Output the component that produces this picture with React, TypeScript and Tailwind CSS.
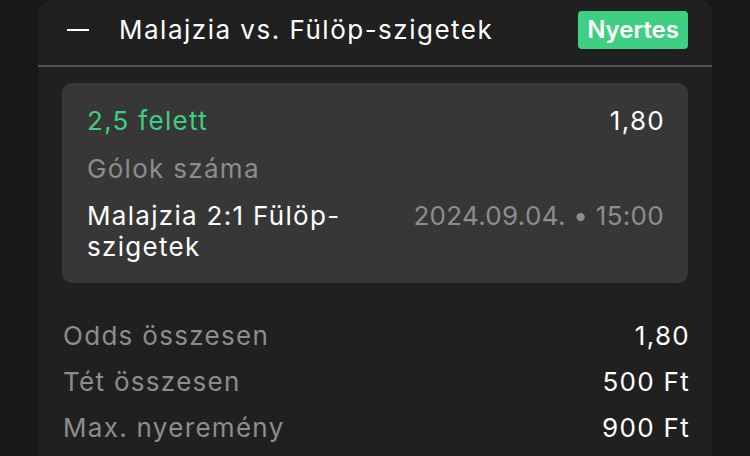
export default function App() {
  // Summary rows under the bet card
  const totals = [
    { label: "Odds összesen", value: "1,80" },
    { label: "Tét összesen", value: "500 Ft" },
    { label: "Max. nyeremény", value: "900 Ft" },
  ];

  return (
    <main
      className="h-[456px] w-[750px] overflow-hidden bg-[#18181a] px-[38px]"
      style={{ fontFamily: "Inter, 'Noto Sans', sans-serif" }}
    >
      <section className="h-full rounded-t-[14px] bg-[#202020]">
        {/* Header */}
        <div className="flex h-[65px] items-center pb-[5px] pl-[29px] pr-[24px]">
          <div className="h-[2px] w-[22px] bg-white" />
          <h1 className="ml-[30px] flex-1 text-[26px] leading-none tracking-[1.5px] text-white">
            Malajzia vs. Fülöp-szigetek
          </h1>
          <span className="flex h-[38px] items-center rounded-[4px] bg-[#3ecf82] px-[9px] text-[24px] font-semibold text-white">
            Nyertes
          </span>
        </div>
        <div className="h-[2px] bg-[#555555]" />

        {/* Bet card */}
        <div className="mx-[24px] mt-[16px] h-[200px] rounded-[10px] bg-[#373737] px-[25px] pt-[22px] text-[26px] leading-[31px] tracking-[1.3px]">
          <div className="flex justify-between">
            <span className="text-[#3ecf82]">2,5 felett</span>
            <span className="-mr-[2px] text-white">1,80</span>
          </div>
          <div className="mt-[17px] text-[#8d8d8d]">Gólok száma</div>
          <div className="mt-[16px] flex justify-between">
            <span className="w-[290px] text-white">Malajzia 2:1 Fülöp-szigetek</span>
            <span className="-mr-[1px] tracking-[0.3px] text-[#8d8d8d]">2024.09.04. • 15:00</span>
          </div>
        </div>

        {/* Totals */}
        <div className="mt-[30px] flex flex-col pl-[25px] pr-[24px] text-[26px] leading-[46px] tracking-[1.3px]">
          {totals.map((row) => (
            <div key={row.label} className="flex h-[46px] justify-between">
              <span className="text-[#8d8d8d]">{row.label}</span>
              <span className="-mr-[2px] text-white">{row.value}</span>
            </div>
          ))}
        </div>
      </section>
    </main>
  );
}
